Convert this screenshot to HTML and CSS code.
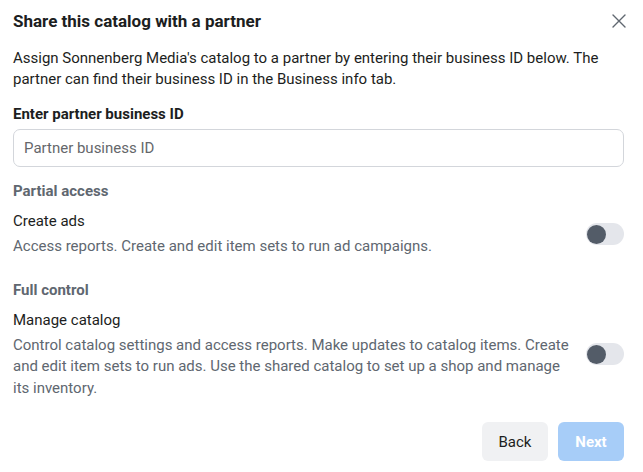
FILE: index.html
```html
<!DOCTYPE html>
<html>
<head>
<meta charset="utf-8">
<link rel="stylesheet" href="styles.css">
</head>
<body>
<div class="dialog">
  <div class="header">
    <h1 class="title">Share this catalog with a partner</h1>
    <button class="close" aria-label="Close">
      <svg width="14" height="14" viewBox="0 0 14 14"><path d="M1 1L13 13M13 1L1 13" stroke="#606770" stroke-width="1.4" fill="none" stroke-linecap="round"/></svg>
    </button>
  </div>
  <p class="intro">Assign Sonnenberg Media's catalog to a partner by entering their business ID below. The partner can find their business ID in the Business info tab.</p>
  <label class="field-label">Enter partner business ID</label>
  <input class="field" type="text" placeholder="Partner business ID">
  <div class="section-label">Partial access</div>
  <div class="option">
    <div class="option-text">
      <div class="option-title">Create ads</div>
      <div class="option-desc">Access reports. Create and edit item sets to run ad campaigns.</div>
    </div>
    <span class="toggle"><span class="knob"></span></span>
  </div>
  <div class="section-label second">Full control</div>
  <div class="option">
    <div class="option-text">
      <div class="option-title">Manage catalog</div>
      <div class="option-desc">Control catalog settings and access reports. Make updates to catalog items. Create and edit item sets to run ads. Use the shared catalog to set up a shop and manage its inventory.</div>
    </div>
    <span class="toggle"><span class="knob"></span></span>
  </div>
  <div class="footer">
    <button class="btn back">Back</button>
    <button class="btn next">Next</button>
  </div>
</div>
</body>
</html>
```

FILE: styles.css
```css
* { box-sizing: border-box; }
body {
  margin: 0;
  background: #fff;
  font-family: Roboto, "Liberation Sans", Arial, sans-serif;
  color: #1c1e21;
}
.dialog {
  width: 643px;
  height: 472px;
  padding: 11px 19px 0 13px;
  display: flex;
  flex-direction: column;
}
.header {
  display: flex;
  align-items: center;
  justify-content: space-between;
}
.title {
  margin: 0;
  font-size: 17px;
  line-height: 20px;
  font-weight: 700;
}
.close {
  border: 0;
  background: none;
  padding: 0;
  width: 14px;
  height: 14px;
  margin-right: -2px;
  display: flex;
}
.intro {
  margin: 17px 0 0;
  font-size: 15px;
  line-height: 21px;
}
.field-label {
  margin-top: 14px;
  font-size: 15px;
  line-height: 20px;
  font-weight: 700;
}
.field {
  margin-top: 5px;
  height: 38px;
  width: 611px;
  border: 1px solid #d3d6db;
  border-radius: 7px;
  padding: 0 10px;
  font-family: inherit;
  font-size: 15px;
  color: #1c1e21;
  outline: none;
}
.field::placeholder { color: #65676b; }
.section-label {
  margin-top: 14px;
  font-size: 15px;
  line-height: 20px;
  font-weight: 700;
  color: #606770;
}
.section-label.second { margin-top: 22px; }
.option {
  margin-top: 10px;
  display: flex;
  align-items: center;
  gap: 16px;
  width: 611px;
}
.option-text { flex: 1; }
.option-title {
  font-size: 15px;
  line-height: 20px;
}
.option-desc {
  margin-top: 5px;
  font-size: 15px;
  line-height: 21.5px;
  color: #606770;
}
.toggle {
  flex: none;
  width: 38px;
  height: 22px;
  border-radius: 11px;
  background: #e4e6eb;
  display: flex;
  align-items: center;
  padding-left: 1px;
}
.knob {
  width: 19px;
  height: 19px;
  border-radius: 50%;
  background: #535c68;
}
.footer {
  margin-top: auto;
  margin-bottom: 11px;
  display: flex;
  justify-content: flex-end;
  gap: 10px;
  width: 611px;
}
.btn {
  width: 66px;
  height: 39px;
  border: 0;
  border-radius: 6px;
  font-family: inherit;
  font-size: 15px;
  padding: 0;
}
.back { background: #f0f1f3; color: #1c1e21; }
.next { background: #a7cdf8; color: #fff; font-weight: 700; }
```
